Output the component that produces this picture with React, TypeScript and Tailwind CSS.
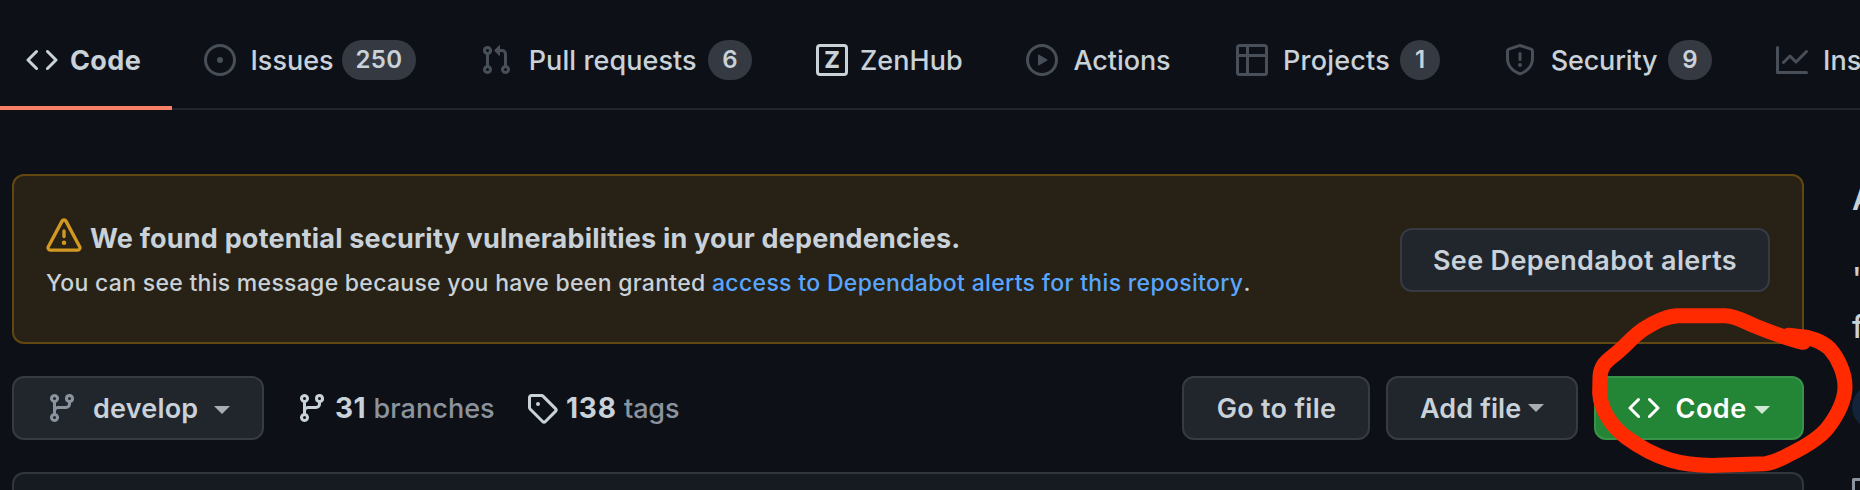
import type { ReactNode } from "react";

const paths = {
  code: "m11.28 3.22 4.25 4.25a.75.75 0 0 1 0 1.06l-4.25 4.25a.749.749 0 0 1-1.275-.326.749.749 0 0 1 .215-.734L13.94 8l-3.72-3.72a.749.749 0 0 1 .326-1.275.749.749 0 0 1 .734.215Zm-6.56 0a.751.751 0 0 1 1.042.018.751.751 0 0 1 .018 1.042L2.06 8l3.72 3.72a.749.749 0 0 1-.326 1.275.749.749 0 0 1-.734-.215L.47 8.53a.75.75 0 0 1 0-1.06Z",
  issue: "M8 9.5a1.5 1.5 0 1 0 0-3 1.5 1.5 0 0 0 0 3ZM8 0a8 8 0 1 1 0 16A8 8 0 0 1 8 0ZM1.5 8a6.5 6.5 0 1 0 13 0 6.5 6.5 0 0 0-13 0Z",
  pull: "M7.177 3.073 9.573.677A.25.25 0 0 1 10 .854v4.792a.25.25 0 0 1-.427.177L7.177 3.427a.25.25 0 0 1 0-.354ZM3.75 2.5a.75.75 0 1 0 0 1.5.75.75 0 0 0 0-1.5Zm-2.25.75a2.25 2.25 0 1 1 3 2.122v5.256a2.251 2.251 0 1 1-1.5 0V5.372A2.25 2.25 0 0 1 1.5 3.25ZM11 2.5h-1V4h1a1 1 0 0 1 1 1v5.628a2.251 2.251 0 1 0 1.5 0V5A2.5 2.5 0 0 0 11 2.5Zm1 10.25a.75.75 0 1 1 1.5 0 .75.75 0 0 1-1.5 0ZM3.75 12a.75.75 0 1 0 0 1.5.75.75 0 0 0 0-1.5Z",
  play: "M8 0a8 8 0 1 1 0 16A8 8 0 0 1 8 0ZM1.5 8a6.5 6.5 0 1 0 13 0 6.5 6.5 0 0 0-13 0Zm4.879-2.773 4.264 2.559a.25.25 0 0 1 0 .428l-4.264 2.559A.25.25 0 0 1 6 10.559V5.442a.25.25 0 0 1 .379-.215Z",
  table: "M0 1.75C0 .784.784 0 1.75 0h12.5C15.216 0 16 .784 16 1.75v12.5A1.75 1.75 0 0 1 14.25 16H1.75A1.75 1.75 0 0 1 0 14.25ZM6.5 6.5v8h7.75a.25.25 0 0 0 .25-.25V6.5Zm8-1.5V1.75a.25.25 0 0 0-.25-.25H6.5V5Zm-13 1.5v7.75c0 .138.112.25.25.25H5v-8ZM5 5V1.5H1.75a.25.25 0 0 0-.25.25V5Z",
  shield: "M7.467.133a1.748 1.748 0 0 1 1.066 0l5.25 1.68A1.75 1.75 0 0 1 15 3.48V7c0 1.566-.32 3.182-1.303 4.682-.983 1.498-2.585 2.813-5.032 3.855a1.697 1.697 0 0 1-1.33 0c-2.447-1.042-4.049-2.357-5.032-3.855C1.32 10.182 1 8.566 1 7V3.48a1.75 1.75 0 0 1 1.217-1.667Zm.61 1.429a.25.25 0 0 0-.153 0l-5.25 1.68a.25.25 0 0 0-.174.238V7c0 1.358.275 2.666 1.057 3.86.784 1.194 2.121 2.34 4.366 3.297a.196.196 0 0 0 .154 0c2.245-.956 3.582-2.104 4.366-3.298C13.225 9.666 13.5 8.36 13.5 7V3.48a.251.251 0 0 0-.174-.237l-5.25-1.68ZM8.75 4.75v3a.75.75 0 0 1-1.5 0v-3a.75.75 0 0 1 1.5 0ZM9 10.5a1 1 0 1 1-2 0 1 1 0 0 1 2 0Z",
  graph: "M1.5 1.75V13.5h13.75a.75.75 0 0 1 0 1.5H.75a.75.75 0 0 1-.75-.75V1.75a.75.75 0 0 1 1.5 0Zm14.28 2.53-5.25 5.25a.75.75 0 0 1-1.06 0L7 7.06 4.28 9.78a.751.751 0 0 1-1.042-.018.751.751 0 0 1-.018-1.042l3.25-3.25a.75.75 0 0 1 1.06 0L10 7.94l4.72-4.72a.751.751 0 0 1 1.042.018.751.751 0 0 1 .018 1.042Z",
  alert: "M8.22 1.754a.25.25 0 0 0-.44 0L1.698 13.132a.25.25 0 0 0 .22.368h12.164a.25.25 0 0 0 .22-.368L8.22 1.754Zm-1.763-.707c.659-1.234 2.427-1.234 3.086 0l6.082 11.378A1.75 1.75 0 0 1 14.082 15H1.918a1.75 1.75 0 0 1-1.543-2.575L6.457 1.047ZM9 11a1 1 0 1 1-2 0 1 1 0 0 1 2 0Zm-.25-5.25a.75.75 0 0 0-1.5 0v2.5a.75.75 0 0 0 1.5 0v-2.5Z",
  branch: "M11.75 2.5a.75.75 0 1 0 0 1.5.75.75 0 0 0 0-1.5Zm-2.25.75a2.25 2.25 0 1 1 3 2.122V6A2.5 2.5 0 0 1 10 8.5H6a1 1 0 0 0-1 1v1.128a2.251 2.251 0 1 1-1.5 0V5.372a2.25 2.25 0 1 1 1.5 0v1.836A2.492 2.492 0 0 1 6 7h4a1 1 0 0 0 1-1v-.628A2.25 2.25 0 0 1 9.5 3.25ZM4.25 12a.75.75 0 1 0 0 1.5.75.75 0 0 0 0-1.5ZM3.5 3.25a.75.75 0 1 1 1.5 0 .75.75 0 0 1-1.5 0Z",
  tag: "M2.5 7.775V2.75a.25.25 0 0 1 .25-.25h5.025a.25.25 0 0 1 .177.073l6.25 6.25a.25.25 0 0 1 0 .354l-5.025 5.025a.25.25 0 0 1-.354 0l-6.25-6.25a.25.25 0 0 1-.073-.177Zm-1.5 0V2.75C1 1.784 1.784 1 2.75 1h5.025c.464 0 .91.184 1.238.513l6.25 6.25a1.75 1.75 0 0 1 0 2.474l-5.026 5.026a1.75 1.75 0 0 1-2.474 0l-6.25-6.25A1.75 1.75 0 0 1 1 7.775ZM6 5a1 1 0 1 0 0 2 1 1 0 0 0 0-2Z",
  book: "M0 1.75A.75.75 0 0 1 .75 1h4.253c1.227 0 2.317.59 3 1.501A3.743 3.743 0 0 1 11.006 1h4.245a.75.75 0 0 1 .75.75v10.5a.75.75 0 0 1-.75.75h-4.507a2.25 2.25 0 0 0-1.591.659l-.622.621a.75.75 0 0 1-1.06 0l-.622-.621A2.25 2.25 0 0 0 5.258 13H.75a.75.75 0 0 1-.75-.75Zm7.251 10.324.004-5.073-.002-2.253A2.25 2.25 0 0 0 5.003 2.5H1.5v9h3.757a3.75 3.75 0 0 1 1.994.574Z",
};

function Icon({ name, className }: { name: keyof typeof paths; className: string }) {
  return (
    <svg viewBox="0 0 16 16" fill="currentColor" fillRule="evenodd" className={`shrink-0 ${className}`}>
      <path d={paths[name]} />
    </svg>
  );
}

function ZenHubIcon() {
  return (
    <span className="flex size-8 shrink-0 items-center justify-center rounded-[4px] border-[3px] border-[#c9d1d9] text-[23px] font-extrabold">
      Z
    </span>
  );
}

function Caret({ className }: { className: string }) {
  return (
    <svg viewBox="0 0 16 8" fill="currentColor" className={`h-2 w-4 shrink-0 ${className}`}>
      <path d="M0 0H16L8 8Z" />
    </svg>
  );
}

function Tab({ icon, label, labelClass, count, countClass, className }: {
  icon: ReactNode; label: string; labelClass: string; count?: string; countClass?: string; className: string;
}) {
  return (
    <a className={`flex h-full shrink-0 items-center ${className}`}>
      {icon}
      <span className={`shrink-0 ${labelClass}`}>{label}</span>
      {count && (
        <span className={`flex h-10 shrink-0 items-center justify-center rounded-full bg-[#353941] text-[24px] font-[560] ${countClass}`}>
          {count}
        </span>
      )}
    </a>
  );
}

function Button({ className, children }: { className: string; children: ReactNode }) {
  return (
    <button className={`flex h-16 shrink-0 items-center rounded-xl border-2 font-[580] ${className}`}>
      {children}
    </button>
  );
}

const gray = "size-8 text-[#484f58]";

export default function App() {
  return (
    <div className="relative flex h-[490px] w-[1860px] flex-col overflow-hidden whitespace-nowrap bg-[#0d1117] font-[Inter,sans-serif] text-[27px] leading-none font-[450] text-[#c9d1d9]">
      <nav className="flex h-[110px] shrink-0 items-stretch border-b-2 border-[#21262d]">
        <div className="-mb-0.5 flex w-[172px] shrink-0 border-b-4 border-[#f78166] pt-3 pl-[26px]">
          <Tab icon={<Icon name="code" className="size-8" />} label="Code" labelClass="ml-3 font-[650] tracking-[0.4px]" className="mt-px" />
        </div>
        <div className="flex pt-3 pl-8">
          <Tab icon={<Icon name="issue" className={gray} />} label="Issues" labelClass="ml-[14.5px] w-[91.5px]" count="250" countClass="w-[74px] tracking-[0.4px]" className="w-[276px]" />
          <Tab icon={<Icon name="pull" className={gray} />} label="Pull requests" labelClass="ml-[16.7px] w-[179.3px] tracking-[0.08px]" count="6" countClass="w-11" className="w-[336px]" />
          <Tab icon={<ZenHubIcon />} label="ZenHub" labelClass="ml-3 tracking-[0.05px]" className="w-[210px]" />
          <Tab icon={<Icon name="play" className={gray} />} label="Actions" labelClass="ml-[15.5px] tracking-[-0.08px]" className="w-[210px]" />
          <Tab icon={<Icon name="table" className={gray} />} label="Projects" labelClass="ml-[15px] w-[117px] tracking-[0.2px]" count="1" countClass="w-10" className="w-[268px]" />
          <Tab icon={<Icon name="shield" className={gray} />} label="Security" labelClass="ml-[14.7px] w-[117.3px] tracking-[-0.15px]" count="9" countClass="w-11" className="w-[272px]" />
          <Tab icon={<Icon name="graph" className={gray} />} label="Insights" labelClass="ml-[15px] tracking-[0.1px]" className="w-[180px]" />
        </div>
      </nav>

      <div className="flex min-h-0 flex-1">
        <main className="ml-3 flex w-[1792px] shrink-0 flex-col">
          <section className="mt-16 flex h-[170px] shrink-0 items-start justify-between rounded-xl border-2 border-[#624710] bg-[#272116] pr-8 pl-8">
            <div>
              <h2 className="mt-[42px] flex h-9 items-center font-[650] tracking-[0.195px]">
                <Icon name="alert" className="size-9 text-[#d29922]" />
                <span className="ml-2 mt-[5px]">We found potential security vulnerabilities in your dependencies.</span>
              </h2>
              <p className="mt-[18px] text-[23px] tracking-[0.29px]">
                You can see this message because you have been granted{" "}
                <a className="tracking-[0.335px] text-[#58a6ff]">access to Dependabot alerts for this repository</a>.
              </p>
            </div>
            <Button className="mt-[52px] w-[370px] justify-center border-[#363b42] bg-[#21262d] tracking-[0.34px]">See Dependabot alerts</Button>
          </section>

          <section className="mt-8 flex shrink-0 items-center">
            <Button className="w-[252px] border-[#363b42] bg-[#21262d] pl-8">
              <Icon name="branch" className="size-8 text-[#8b949e]" />
              <span className="ml-[15px] w-[121px] text-left tracking-[0.2px]">develop</span>
              <Caret className="mt-1 text-[#a7adb5]" />
            </Button>
            <a className="ml-8 flex w-[230px] items-center">
              <Icon name="branch" className="size-8" />
              <strong className="ml-[7px] w-[38.5px] text-[28px] font-[650] tracking-[0.4px]">31</strong>
              <span className="tracking-[0.05px] text-[#8b949e]">branches</span>
            </a>
            <a className="flex items-center">
              <Icon name="tag" className="size-8" />
              <strong className="ml-[8px] w-[58px] text-[28px] font-[650] tracking-[0.8px]">138</strong>
              <span className="tracking-[-0.15px] text-[#8b949e]">tags</span>
            </a>
            <div className="ml-auto flex gap-4">
              <Button className="w-[188px] justify-center border-[#363b42] bg-[#21262d] pl-px tracking-[0.3px]">Go to file</Button>
              <Button className="w-[192px] border-[#363b42] bg-[#21262d] pl-8">
                <span className="w-[108px] text-left tracking-[0.1px]">Add file</span>
                <Caret className="text-[#a7adb5]" />
              </Button>
              <Button className="w-[210px] border-[#399249] bg-[#238636] pl-8 text-white">
                <Icon name="code" className="size-8" />
                <span className="ml-[15.5px] w-[78.5px] text-left tracking-[0.5px]">Code</span>
                <Caret className="mt-1 text-[#d3e7d7]" />
              </Button>
            </div>
          </section>

          <section className="mt-8 h-16 shrink-0 rounded-t-xl border-2 border-[#30363d] bg-[#161b22]" />
        </main>

        <aside className="ml-12 flex w-[500px] shrink-0 flex-col">
          <h2 className="mt-[73px] h-8 text-[31px] leading-8 font-semibold">About</h2>
          <p className="mt-10 text-[31px] leading-[48px]">
            "Open source
            <br />
            for everyone"
          </p>
          <span className="mt-[34px] h-[44px] w-40 shrink-0 rounded-full bg-[#13233a]" />
          <Icon name="book" className="mt-[47px] size-8 text-[#8b949e]" />
        </aside>
      </div>

      <svg viewBox="0 0 1500 990" fill="none" className="pointer-events-none absolute top-[160px] left-[1360px] h-[330px] w-[500px]">
        <path
          d="M1330 547C1270 533 1230 515 1185 498C1155 486 1130 468 1095 467L955 467C915 468 880 488 850 508C815 532 800 555 765 583C740 603 722 615 720 650L719 700C722 750 755 800 800 833C840 862 890 888 930 900C980 915 1020 917 1070 916L1215 911C1245 909 1270 892 1295 880C1335 860 1375 838 1402 805C1430 768 1455 720 1455 680C1455 640 1435 595 1408 565C1385 543 1345 531 1325 530L1285 526"
          stroke="#ff2a00"
          strokeWidth="45"
          strokeLinecap="round"
          strokeLinejoin="round"
        />
      </svg>
    </div>
  );
}
